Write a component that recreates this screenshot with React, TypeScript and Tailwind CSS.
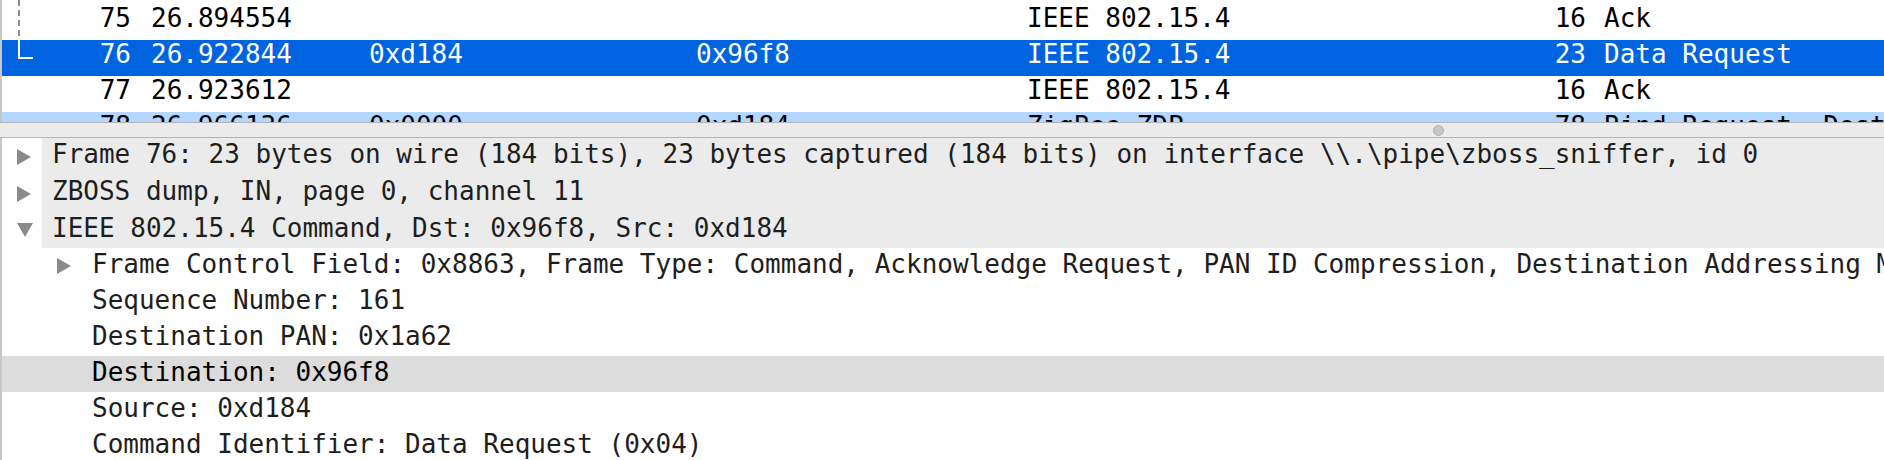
import React from "react";

type Packet = {
  no: string;
  time: string;
  src: string;
  dst: string;
  proto: string;
  len: string;
  info: string;
  kind: "normal" | "selected" | "related";
  tree: "dash" | "end" | "none";
};

const packets: Packet[] = [
  { no: "75", time: "26.894554", src: "", dst: "", proto: "IEEE 802.15.4", len: "16", info: "Ack", kind: "normal", tree: "dash" },
  { no: "76", time: "26.922844", src: "0xd184", dst: "0x96f8", proto: "IEEE 802.15.4", len: "23", info: "Data Request", kind: "selected", tree: "end" },
  { no: "77", time: "26.923612", src: "", dst: "", proto: "IEEE 802.15.4", len: "16", info: "Ack", kind: "normal", tree: "none" },
  { no: "78", time: "26.966136", src: "0x0000", dst: "0xd184", proto: "ZigBee ZDP", len: "78", info: "Bind Request, Dest", kind: "related", tree: "none" },
];

function TreeMark({ tree }: { tree: Packet["tree"] }) {
  if (tree === "dash") {
    return (
      <svg width="38" height="40" className="block">
        <line x1="17" y1="0" x2="17" y2="40" stroke="#8e8e8e" strokeWidth="2" strokeDasharray="6 4" />
      </svg>
    );
  }
  if (tree === "end") {
    return (
      <svg width="38" height="36" className="block">
        <path d="M17 0 V18 H31" fill="none" stroke="#ffffff" strokeWidth="2" />
      </svg>
    );
  }
  return null;
}

function Arrow({ open }: { open?: boolean }) {
  return open ? (
    <svg width="16" height="14" viewBox="0 0 16 14" className="block">
      <polygon points="0,0 16,0 8,14" fill="#8a8a8a" />
    </svg>
  ) : (
    <svg width="14" height="16" viewBox="0 0 14 16" className="block">
      <polygon points="0,0 14,8 0,16" fill="#8a8a8a" />
    </svg>
  );
}

function PacketRow({ p, first }: { p: Packet; first?: boolean }) {
  const bg =
    p.kind === "selected" ? "bg-[#0064e1] text-white" : p.kind === "related" ? "bg-[#b3d7ff] text-black" : "bg-white text-black";
  return (
    <div className={`flex whitespace-nowrap ${bg} ${first ? "h-[40px] pt-1" : "h-9"}`}>
      <div className={`w-[38px] shrink-0 ${first ? "-mt-1" : ""}`}>
        <TreeMark tree={p.tree} />
      </div>
      <div className="w-[91px] shrink-0 text-right leading-[28px]">{p.no}</div>
      <div className="ml-[20px] w-[218px] shrink-0 leading-[28px]">{p.time}</div>
      <div className="w-[327px] shrink-0 leading-[28px]">{p.src}</div>
      <div className="w-[331px] shrink-0 leading-[28px]">{p.dst}</div>
      <div className="w-[473px] shrink-0 leading-[28px]">{p.proto}</div>
      <div className="w-[86px] shrink-0 text-right leading-[28px]">{p.len}</div>
      <div className="pl-[18px] leading-[28px]">{p.info}</div>
    </div>
  );
}

type Detail = { text: string; level: 0 | 1; arrow?: "open" | "closed"; selected?: boolean; h?: string };

const details: Detail[] = [
  {
    text: "Frame 76: 23 bytes on wire (184 bits), 23 bytes captured (184 bits) on interface \\\\.\\pipe\\zboss_sniffer, id 0",
    level: 0,
    arrow: "closed",
    h: "h-[37px]",
  },
  { text: "ZBOSS dump, IN, page 0, channel 11", level: 0, arrow: "closed", h: "h-[37px]" },
  { text: "IEEE 802.15.4 Command, Dst: 0x96f8, Src: 0xd184", level: 0, arrow: "open" },
  {
    text: "Frame Control Field: 0x8863, Frame Type: Command, Acknowledge Request, PAN ID Compression, Destination Addressing Mode: Short/16-bit (0x2), Frame Version: IEEE Std 802.15.4-2003 (0)",
    level: 1,
    arrow: "closed",
  },
  { text: "Sequence Number: 161", level: 1 },
  { text: "Destination PAN: 0x1a62", level: 1 },
  { text: "Destination: 0x96f8", level: 1, selected: true },
  { text: "Source: 0xd184", level: 1 },
  { text: "Command Identifier: Data Request (0x04)", level: 1 },
];

function DetailRow({ d }: { d: Detail }) {
  const h = d.h ?? "h-9";
  if (d.level === 0) {
    return (
      <div className={`flex ${h} whitespace-nowrap`}>
        <div className="flex w-[40px] shrink-0 items-center pl-[15px]">
          <Arrow open={d.arrow === "open"} />
        </div>
        <div className="flex-1 overflow-hidden bg-[#ebebeb] pl-[10px] leading-[32px] text-[#1e1e1e]">{d.text}</div>
      </div>
    );
  }
  return (
    <div className={`flex ${h} whitespace-nowrap ${d.selected ? "bg-[#dcdcdc] text-black" : "text-[#1e1e1e]"}`}>
      <div className="flex w-[80px] shrink-0 items-center pl-[55px]">{d.arrow ? <Arrow /> : null}</div>
      <div className="flex-1 overflow-hidden pl-[10px] leading-[32px]">{d.text}</div>
    </div>
  );
}

export default function App() {
  return (
    <div className="h-[460px] w-[1884px] overflow-hidden bg-white font-['DejaVu_Sans_Mono','Liberation_Mono',monospace] text-[26px]">
      {/* Packet list */}
      <div className="h-[122px] overflow-hidden border-l-2 border-[#c6c6c6]">
        {packets.map((p, i) => (
          <PacketRow key={p.no} p={p} first={i === 0} />
        ))}
      </div>

      {/* Splitter */}
      <div className="relative h-[16px] border-y border-[#b4b4b4] bg-[#ececec]">
        <div className="absolute left-[1433px] top-[2px] h-[11px] w-[11px] rounded-full border border-[#b0b0b0] bg-[#c8c8c8]" />
      </div>

      {/* Details */}
      <div className="h-[322px] overflow-hidden border-l-2 border-[#c6c6c6]">
        {details.map((d, i) => (
          <DetailRow key={i} d={d} />
        ))}
      </div>
    </div>
  );
}
